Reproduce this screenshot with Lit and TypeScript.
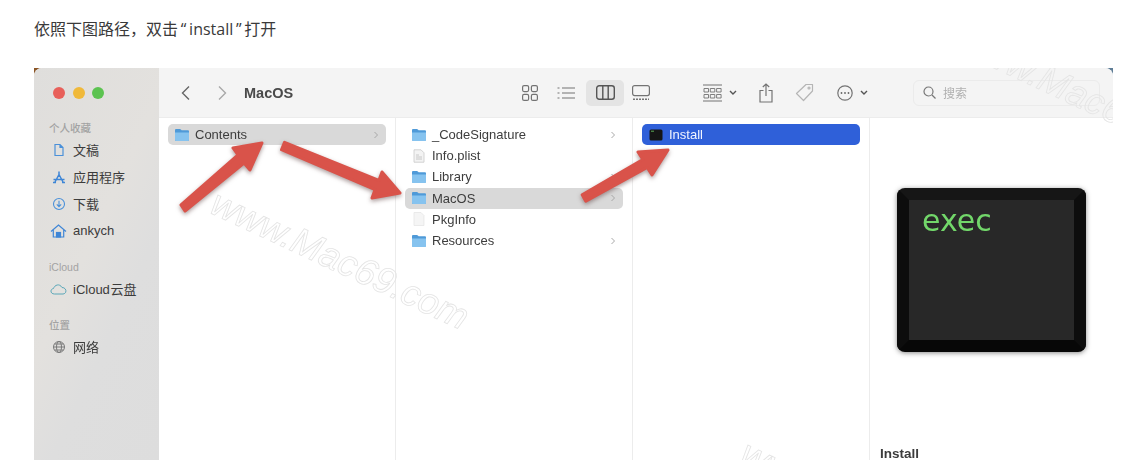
import { LitElement, html, css, svg } from "lit";
import { customElement } from "lit/decorators.js";

const folder = html`<svg class="fi" viewBox="0 0 16 14"><path d="M1 2.2C1 1.5 1.5 1 2.2 1h3.6c.5 0 .8.2 1.1.5l.7.8h6.2c.7 0 1.2.5 1.2 1.2v8.3c0 .7-.5 1.2-1.2 1.2H2.2C1.500 13 1 12.500 1 11.800z" fill="#4f9ad8"/><path d="M1 4.400h14v7.400c0 .7-.5 1.200-1.200 1.200H2.200C1.500 13 1 12.500 1 11.800z" fill="#86c3ef"/></svg>`;
const doc = html`<svg class="fi" viewBox="0 0 16 14"><path d="M3 .8h7l3 3v9.400H3z" fill="#f3f3f3" stroke="#c9c9c9" stroke-width=".8"/><path d="M5 8h6M5 10h6M5 6h3" stroke="#bdbdbd" stroke-width=".8"/></svg>`;
const blank = html`<svg class="fi" viewBox="0 0 16 14"><path d="M3 .5h7l3 3v10H3z" fill="#f5f5f5" stroke="#e4e4e4" stroke-width=".7"/></svg>`;
const chev = html`<svg class="chev" viewBox="0 0 6 8"><path d="M1.500 1l3 3-3 3" fill="none" stroke="#a8a8a8" stroke-width="1"/></svg>`;
const tool = (cls: string, w: number, h: number, body: unknown) =>
  html`<svg class=${cls} width=${w} height=${h} viewBox="0 0 ${w} ${h}" fill="none" stroke="#737373" stroke-width="1.200">${body}</svg>`;

const columns = [
  [{ n: "Contents", i: folder, c: true, s: "grey" }],
  [
    { n: "_CodeSignature", i: folder, c: true },
    { n: "Info.plist", i: doc },
    { n: "Library", i: folder, c: true },
    { n: "MacOS", i: folder, c: true, s: "grey" },
    { n: "PkgInfo", i: blank },
    { n: "Resources", i: folder, c: true },
  ],
  [
    {
      n: "Install",
      s: "blue",
      i: html`<svg class="fi" viewBox="0 0 16 14"><rect x="1.500" y="1.500" width="13" height="11" rx="1.500" fill="#151515"/><path d="M3 3.200h3" stroke="#6fd467" stroke-width=".8"/></svg>`,
    },
  ],
];

@customElement("app-root")
export class AppRoot extends LitElement {
  static styles = css`
    :host { display: block; position: relative; width: 1141px; height: 460px; overflow: hidden; background: #fff; font-family: "Liberation Sans", "Noto Sans CJK SC", sans-serif; }
    .intro { margin: 0; padding: 18px 0 0 34px; height: 68px; box-sizing: border-box; font: 16px/22px "Open Sans", "Noto Sans CJK SC", sans-serif; color: #3a3a3a; }
    .q { padding: 0 2.750px; }
    .desk { margin-left: 34px; width: 1079px; height: 392px; background: linear-gradient(90deg, #8a5526 0 40px, #fff 40px 1040px, #5f7d96 1040px); }
    .win { display: flex; height: 100%; border-radius: 8px 8px 0 0; overflow: hidden; filter: blur(.45px); background: #fff; }
    .side { width: 125px; flex: none; box-sizing: border-box; padding: 18px 0 0 15px; background: linear-gradient(115deg, #dfdedc, #e3e1de 45%, #dedede 65%, #dddddd); color: #3c3c3c; }
    .lights { display: flex; gap: 7.500px; margin: 1px 0 22px 4px; }
    .lights i { width: 12px; height: 12px; border-radius: 50%; }
    .r { background: #e8605a; } .y { background: #f0b93a; } .g { background: #5cc350; }
    .sec { font-size: 10.500px; line-height: 14px; color: #a3a3a3; font-weight: 500; height: 14px; }
    .sec.n { margin-top: 16px; }
    .item { display: flex; align-items: center; gap: 7px; height: 27px; font-size: 13px; padding-left: 3px; }
    .sec + .item { margin-top: 1px; }
    .item svg { width: 14px; height: 14px; flex: none; }
    .item svg.wide { width: 17px; margin: 0 -1px 0 -2px; }
    .tight { word-spacing: -3px; }
    .main { flex: 1; display: flex; flex-direction: column; min-width: 0; }
    .bar { height: 50px; flex: none; box-sizing: border-box; display: flex; align-items: center; padding: 0 13px 0 20px; background: #f4f4f4; border-bottom: 1px solid #ececec; }
    .title { font-size: 14.500px; font-weight: 700; color: #4a4a4a; margin-left: 15px; }
    .fwd { margin-left: 22px; }
    .spacer { flex: 1; }
    .pill { width: 38px; height: 26px; border-radius: 5px; background: #e4e4e4; display: flex; align-items: center; justify-content: center; margin-left: 11px; }
    .m7 { margin-left: 7px; } .m8 { margin-left: 8px; } .m19 { margin-left: 19px; } .m22 { margin-left: 22px; } .m23 { margin-left: 23px; } .m53 { margin-left: 53px; }
    .search { margin-left: 45px; width: 187px; height: 26px; box-sizing: border-box; border: 1px solid #ebebeb; border-radius: 6px; display: flex; align-items: center; gap: 7px; padding-left: 9px; font-size: 12px; color: #b0b0b0; }
    .cols { flex: 1; display: grid; grid-template-columns: 237px 237px 237px 243px; min-height: 0; }
    .col { border-right: 1px solid #ececec; padding: 6px 9px 0; box-sizing: border-box; }
    .col:last-child { border-right: 0; }
    .row { display: flex; align-items: center; height: 21.200px; padding: 0 7px 0 6px; border-radius: 5px; font-size: 13px; color: #3d3d3d; gap: 5px; }
    .row.grey { background: #d9d9d9; }
    .row.blue { background: #2f60d9; color: #f2f5ff; }
    .fi { width: 16px; height: 14px; flex: none; }
    .chev { width: 6px; height: 8px; margin-left: auto; }
    .prev { display: flex; flex-direction: column; padding: 70px 0 0 10px; box-sizing: border-box; height: 100%; border-right: 0; }
    .icon { margin-left: 17px; width: 189px; height: 164px; box-sizing: border-box; border: 12px solid #0d0d0d; border-top-color: #161616; border-bottom-color: #070707; border-radius: 8px; background: #282828; padding: 0 0 0 13px; box-shadow: 0 1px 5px rgba(40, 40, 40, .55); flex: none; color: #72d76a; font: 30px/42px "DejaVu Sans", sans-serif; }
    .name { margin-top: auto; font-size: 13.500px; font-weight: 700; color: #3c3c3c; line-height: 17px; margin-bottom: -2px; }
    .over { position: absolute; left: 0; top: 0; width: 1141px; height: 460px; pointer-events: none; filter: blur(.5px); }
    .arrow { fill: #d9534a; stroke: #d9534a; stroke-width: 3; stroke-linejoin: round; filter: drop-shadow(0 2px 2px rgba(90, 60, 60, .5)); }
    .wm { font: italic 37px "Liberation Sans", sans-serif; fill: none; stroke: #e4e4e4; stroke-width: .8; }
  `;

  render() {
    return html`
      <p class="intro">依照下图路径，双击<span class="q">“</span>install<span class="q">”</span>打开</p>
      <div class="desk">
        <div class="win">
          <aside class="side">
            <div class="lights"><i class="r"></i><i class="y"></i><i class="g"></i></div>
            <div class="sec">个人收藏</div>
            <div class="item"><svg viewBox="0 0 14 14" fill="none" stroke="#4a90d9" stroke-width="1.200"><path d="M3 1.500h5l3 3v8H3zM8 1.500v3h3"/></svg>文稿</div>
            <div class="item"><svg viewBox="0 0 14 14" fill="none" stroke="#3f86d6" stroke-width="1.500"><path d="M7 1.500v3L3 12M7 4.500l4 7.500M1.500 9.500h11M1 12.500h3M10 12.500h3"/></svg>应用程序</div>
            <div class="item"><svg viewBox="0 0 14 14" fill="none" stroke="#4a90d9" stroke-width="1.100"><circle cx="7" cy="7" r="5.500"/><path d="M7 3.800v5.600M4.800 7.400L7 9.600l2.200-2.200"/></svg>下载</div>
            <div class="item"><svg class="wide" viewBox="0 0 17 14" fill="none" stroke="#3f86d6" stroke-width="1.200"><path d="M1 7.500l7.500-6.500L16 7.500M3.300 6v7h10.400V6"/><rect x="6.500" y="8.500" width="4" height="4.500" fill="#3f86d6"/></svg>ankych</div>
            <div class="sec n">iCloud</div>
            <div class="item"><svg class="wide" viewBox="0 0 17 14" fill="none" stroke="#5ba7b8" stroke-width="1"><path d="M4.500 12c-4.500 0-4.500-5-1-5.500C4.500 3 9.500 1 12 5.500c4.500-.2 5.500 6 1 6.500z"/></svg><span class="tight">iCloud 云盘</span></div>
            <div class="sec n">位置</div>
            <div class="item"><svg viewBox="0 0 14 14" fill="none" stroke="#7a7a7a" stroke-width="1"><circle cx="7" cy="7" r="5.500"/><ellipse cx="7" cy="7" rx="2.500" ry="5.500"/><path d="M1.500 7h11M2.500 4h9M2.500 10h9"/></svg>网络</div>
          </aside>
          <div class="main">
            <div class="bar">
              ${tool("", 14, 18, svg`<path d="M10 2.500L3.500 9l6.500 6.500" stroke="#666" stroke-width="1.400"/>`)}
              ${tool("fwd", 14, 18, svg`<path d="M4 2.500L10.500 9 4 15.500" stroke="#a8a8a8" stroke-width="1.400"/>`)}
              <span class="title">MacOS</span>
              <span class="spacer"></span>
              ${tool("", 16, 16, svg`<rect x=".6" y=".6" width="6" height="6" rx="1.500"/><rect x="9.400" y=".6" width="6" height="6" rx="1.500"/><rect x=".6" y="9.400" width="6" height="6" rx="1.500"/><rect x="9.400" y="9.400" width="6" height="6" rx="1.500"/>`)}
              ${tool("m19", 18, 14, svg`<path d="M5 2h13M5 7h13M5 12h13M.5 2h2M.5 7h2M.5 12h2"/>`)}
              <span class="pill">${tool("", 19, 15, svg`<rect x=".7" y=".7" width="17.600" height="13.600" rx="2.500" stroke="#555" stroke-width="1.400"/><path d="M6.800 1v13M12.200 1v13" stroke="#555" stroke-width="1.400"/>`)}</span>
              ${tool("m8", 18, 16, svg`<rect x=".6" y=".6" width="16.800" height="10" rx="2"/><path d="M1 14.200h16" stroke-dasharray="2 1" stroke-width="1.600"/>`)}
              ${tool("m53", 19, 18, svg`<path d="M0 1h19M0 17h19" stroke-width="1"/><path d="M1 4.500h4.500v3.500H1zM7.300 4.500h4.500v3.500H7.300zM13.600 4.500h4.500v3.500h-4.500zM1 10.500h4.500V14H1zM7.300 10.500h4.500V14H7.300zM13.600 10.500h4.500V14h-4.500z" stroke-width=".9"/>`)}
              ${tool("m7", 8, 6, svg`<path d="M1 1l3 3 3-3" stroke="#555" stroke-width="1.400"/>`)}
              ${tool("m22", 14, 20, svg`<path d="M4.500 7.500H1v11.500h12V7.500H9.500M7 13V1M3.800 4L7 1l3.200 3"/>`)}
              ${tool("m22", 19, 19, svg`<path d="M11 1.500h6.500v6.500L8.500 17.500 1.500 10.500z" stroke="#b5b5b5" stroke-linejoin="round"/><circle cx="14" cy="5" r="1" stroke="#b5b5b5"/>`)}
              ${tool("m23", 16, 16, svg`<circle cx="8" cy="8" r="7.200"/><circle cx="4.500" cy="8" r=".9" fill="#666" stroke="none"/><circle cx="8" cy="8" r=".9" fill="#666" stroke="none"/><circle cx="11.500" cy="8" r=".9" fill="#666" stroke="none"/>`)}
              ${tool("m7", 8, 6, svg`<path d="M1 1l3 3 3-3" stroke="#555" stroke-width="1.400"/>`)}
              <div class="search">${tool("", 13, 13, svg`<circle cx="5.500" cy="5.500" r="4.500" stroke="#777"/><path d="M9 9l3.500 3.500" stroke="#777"/>`)}<span>搜索</span></div>
            </div>
            <div class="cols">
              ${columns.map(
                (col) => html`<div class="col">
                  ${col.map(
                    (f: any) => html`<div class="row ${f.s ?? ""}">${f.i}<span>${f.n}</span>${f.c ? chev : ""}</div>`
                  )}
                </div>`
              )}
              <div class="col prev">
                <div class="icon">exec</div>
                <div class="name">Install</div>
              </div>
            </div>
          </div>
        </div>
      </div>
      <svg class="over" viewBox="0 0 1141 460">
        <defs><clipPath id="w"><rect x="34" y="68" width="1079" height="392"/></clipPath></defs>
        <g clip-path="url(#w)">
          <text class="wm" transform="translate(208 212) rotate(25)">www.Mac69.com</text>
          <text class="wm" transform="translate(955 50) rotate(25)">www.Mac69.com</text>
          <text class="wm" transform="translate(738 462) rotate(25)">www.Mac69.com</text>
        </g>
        <polygon class="arrow" points="181,205 238,155 233,148 262,143 250,170 244,163 185,211"/>
        <polygon class="arrow" points="284.500,142.300 378.900,180.400 382,172 400,193 372,198 375.100,189.600 281.500,149.700"/>
        <polygon class="arrow" points="582.200,194.800 642.800,159.500 638,152 668,150 652,175 647.200,167.500 585.800,201.200"/>
      </svg>
    `;
  }
}
